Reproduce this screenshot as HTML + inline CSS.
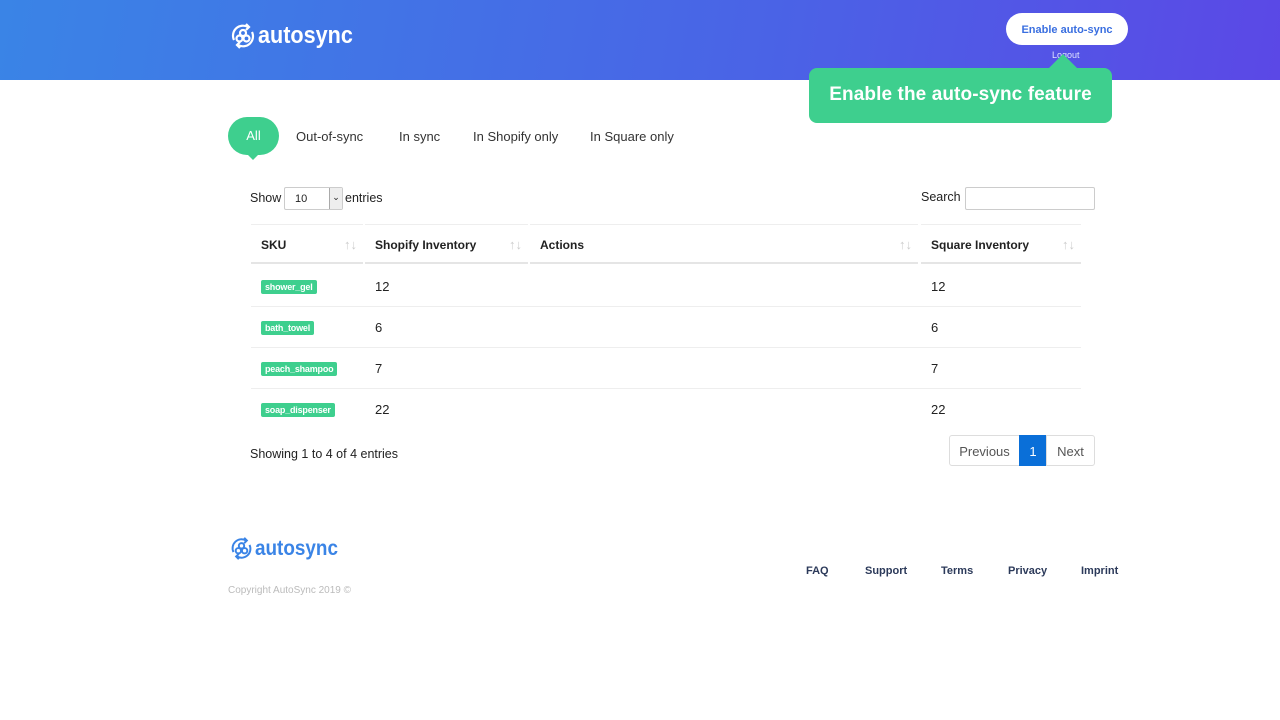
<!DOCTYPE html>
<html><head><meta charset="utf-8"><style>
*{box-sizing:border-box;margin:0;padding:0}
body{width:1280px;height:720px;background:#fff;font-family:"Liberation Sans",sans-serif;color:#222;position:relative;overflow:hidden}
.hdr{position:absolute;left:0;top:0;width:1280px;height:80px;background:linear-gradient(100deg,#3a84e6 0%,#4a63e6 60%,#5b48e6 100%)}
.logo{position:absolute;display:flex;align-items:center;font-weight:bold}
.btn{position:absolute;left:1006px;top:13px;width:122px;height:32px;border-radius:16px;background:#fff;color:#3a6fe0;font-size:11px;font-weight:bold;text-align:center;line-height:34px}
.logout{position:absolute;left:1052px;top:50px;font-size:9px;color:#e0e4ff}
.tip{position:absolute;left:809px;top:68px;width:303px;height:55px;background:#3ecf8e;border-radius:8px;color:#fff;font-size:19px;font-weight:bold;letter-spacing:0.1px;text-align:center;line-height:53px}
.tip:before{content:"";position:absolute;left:240px;top:-14px;border:14px solid transparent;border-top:0;border-bottom-color:#3ecf8e}
.tabs{position:absolute;top:117px;left:228px;font-size:13px;color:#333}
.tabs span{position:absolute;top:12px;white-space:nowrap}
.all{position:absolute;left:0;top:0;width:51px;height:38px;border-radius:19px;background:#3ecf8e;color:#fff;text-align:center;line-height:38px}
.all:after{content:"";position:absolute;left:19px;bottom:-5px;border:6px solid transparent;border-bottom:0;border-top-color:#3ecf8e}
.t{position:absolute;font-size:12.5px}
.sel{position:absolute;left:284px;top:187px;width:59px;height:23px;border:1px solid #ccc;border-radius:2px;font-size:11px;padding-left:10px;line-height:23px}
.sel i{position:absolute;right:0;top:0;width:13px;height:21px;border-left:1px solid #aaa;background:#eee;font-style:normal;font-size:9px;text-align:center;line-height:19px}
.search{position:absolute;left:965px;top:187px;width:130px;height:23px;border:1px solid #ccc;border-radius:2px}
.th{position:absolute;top:224px;height:40px;border-top:1px solid #eee;border-bottom:2px solid #e5e5e5;font-weight:bold;font-size:12px;line-height:40px;padding-left:10px}
.th b{position:absolute;right:6px;top:0;color:#ccc;font-weight:normal;font-size:13px}
.row{position:absolute;height:41px;border-bottom:1px solid #eee}
.cell{position:absolute;font-size:13px}
.tag{position:absolute;left:261px;height:14px;background:#3ecf8e;color:#fff;font-size:9px;font-weight:bold;padding:0 4px;border-radius:2px;line-height:14px;letter-spacing:-0.2px}
.pg{position:absolute;top:435px;height:31px;border:1px solid #ddd;font-size:13px;color:#555;line-height:31px;text-align:center}
.f{position:absolute;top:565px;font-size:11px;font-weight:bold;color:#2c3a5a}
</style></head><body>
<div class="hdr">
<div class="logo" style="left:229px;top:22px;color:#fff;font-size:24px">
<svg width="28" height="28" viewBox="0 0 28 28" fill="none" stroke="#fff" stroke-width="2.2"><path d="M5 18A10 10 0 0 1 19 5"/><path d="M23 10A10 10 0 0 1 9 23"/><path d="M17 2l3 3-3 3M11 26l-3-3 3-3"/><circle cx="14" cy="11" r="3"/><circle cx="10.5" cy="16.5" r="3"/><circle cx="17.5" cy="16.5" r="3"/></svg>
<span style="margin-left:1px;display:inline-block;transform:scaleX(0.9);transform-origin:left">autosync</span></div>
<div class="btn">Enable auto-sync</div>
<div class="logout">Logout</div>
</div>
<div class="tip">Enable the auto-sync feature</div>
<div class="tabs"><div class="all">All</div>
<span style="left:68px">Out-of-sync</span><span style="left:171px">In sync</span><span style="left:245px">In Shopify only</span><span style="left:362px">In Square only</span></div>
<div class="t" style="left:250px;top:191px">Show</div>
<div class="sel">10<i>⌄</i></div>
<div class="t" style="left:345px;top:191px">entries</div>
<div class="t" style="left:921px;top:190px">Search</div>
<div class="search"></div>
<div class="th" style="left:251px;width:112px">SKU<b>↑↓</b></div>
<div class="th" style="left:365px;width:163px">Shopify Inventory<b>↑↓</b></div>
<div class="th" style="left:530px;width:388px">Actions<b>↑↓</b></div>
<div class="th" style="left:921px;width:160px">Square Inventory<b>↑↓</b></div>
<div class="row" style="left:251px;width:830px;top:266px"></div>
<div class="row" style="left:251px;width:830px;top:307px"></div>
<div class="row" style="left:251px;width:830px;top:348px"></div>
<div class="row" style="left:251px;width:830px;top:389px;border:0"></div>
<div class="tag" style="top:280px">shower_gel</div><div class="cell" style="left:375px;top:279px">12</div><div class="cell" style="left:931px;top:279px">12</div>
<div class="tag" style="top:321px">bath_towel</div><div class="cell" style="left:375px;top:320px">6</div><div class="cell" style="left:931px;top:320px">6</div>
<div class="tag" style="top:362px">peach_shampoo</div><div class="cell" style="left:375px;top:361px">7</div><div class="cell" style="left:931px;top:361px">7</div>
<div class="tag" style="top:403px">soap_dispenser</div><div class="cell" style="left:375px;top:402px">22</div><div class="cell" style="left:931px;top:402px">22</div>
<div class="t" style="left:250px;top:447px">Showing 1 to 4 of 4 entries</div>
<div class="pg" style="left:949px;width:71px;border-radius:3px 0 0 3px">Previous</div>
<div class="pg" style="left:1019px;width:28px;background:#0a6fd8;border-color:#0a6fd8;color:#fff">1</div>
<div class="pg" style="left:1046px;width:49px;border-radius:0 3px 3px 0">Next</div>
<div class="logo" style="left:229px;top:536px;color:#3a84e6;font-size:21px">
<svg width="25" height="25" viewBox="0 0 28 28" fill="none" stroke="#3a84e6" stroke-width="2.2"><path d="M5 18A10 10 0 0 1 19 5"/><path d="M23 10A10 10 0 0 1 9 23"/><path d="M17 2l3 3-3 3M11 26l-3-3 3-3"/><circle cx="14" cy="11" r="3"/><circle cx="10.5" cy="16.5" r="3"/><circle cx="17.5" cy="16.5" r="3"/></svg>
<span style="margin-left:1px;display:inline-block;transform:scaleX(0.9);transform-origin:left">autosync</span></div>
<div class="t" style="left:228px;top:585px;font-size:10px;color:#bbb">Copyright AutoSync 2019 ©</div>
<div class="f" style="left:806px">FAQ</div><div class="f" style="left:865px">Support</div><div class="f" style="left:941px">Terms</div><div class="f" style="left:1008px">Privacy</div><div class="f" style="left:1081px">Imprint</div>
</body></html>
